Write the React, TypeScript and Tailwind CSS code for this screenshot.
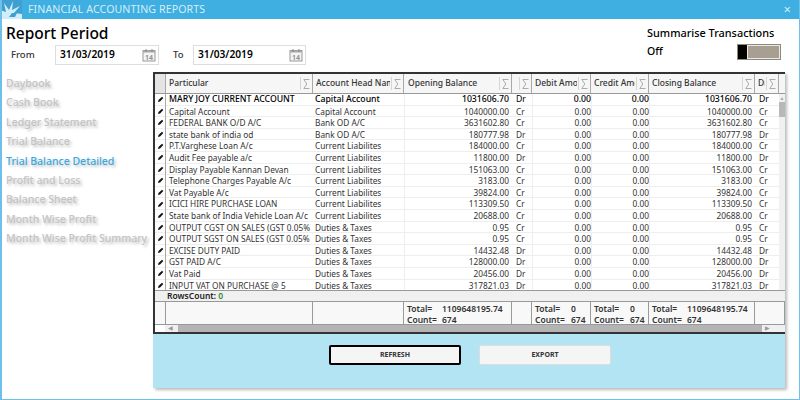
import React from "react";

const cols = "grid grid-cols-[11px_147px_91px_108px_20px_59px_58px_106px_24px]";
const footCols = "grid grid-cols-[11px_147px_91px_108px_20px_59px_58px_106px_30px]";
const rows: [string, string, string, string][] = [
  ["MARY JOY CURRENT ACCOUNT", "Capital Account", "1031606.70", "Dr"],
  ["Capital Account", "Capital Account", "1040000.00", "Cr"],
  ["FEDERAL BANK O/D A/C", "Bank OD A/C", "3631602.80", "Cr"],
  ["state bank of india od", "Bank OD A/C", "180777.98", "Dr"],
  ["P.T.Varghese Loan A/c", "Current Liabilites", "184000.00", "Cr"],
  ["Audit  Fee payable a/c", "Current Liabilites", "11800.00", "Dr"],
  ["Display Payable Kannan Devan", "Current Liabilites", "151063.00", "Cr"],
  ["Telephone Charges Payable A/c", "Current Liabilites", "3183.00", "Cr"],
  ["Vat Payable A/c", "Current Liabilites", "39824.00", "Cr"],
  ["ICICI HIRE PURCHASE LOAN", "Current Liabilites", "113309.50", "Cr"],
  ["State bank of India Vehicle Loan A/c", "Current Liabilites", "20688.00", "Cr"],
  ["OUTPUT CGST ON SALES (GST 0.05%", "Duties & Taxes", "0.95", "Cr"],
  ["OUTPUT SGST ON SALES (GST 0.05%", "Duties & Taxes", "0.95", "Cr"],
  ["EXCISE DUTY PAID", "Duties & Taxes", "14432.48", "Dr"],
  ["GST PAID A/C", "Duties & Taxes", "128000.00", "Dr"],
  ["Vat Paid", "Duties & Taxes", "20456.00", "Dr"],
  ["INPUT VAT ON PURCHASE @ 5", "Duties & Taxes", "317821.03", "Dr"],
];
const menu = ["Daybook", "Cash Book", "Ledger Statement", "Trial Balance", "Trial Balance Detailed", "Profit and Loss", "Balance Sheet", "Month Wise Profit", "Month Wise Profit Summary"];

function Sigma() {
  return (
    <span className="flex items-center h-[13px] border-l border-gray-300 pl-[2px] shrink-0">
      <svg width="7" height="10" viewBox="0 0 7 10" fill="none">
        <path d="M6.5 0.5H0.8L3.8 5L0.8 9.5H6.5" stroke="#999" strokeWidth="0.8" />
      </svg>
    </span>
  );
}
function Head({ label, pl = "pl-[3px]" }: { label: string; pl?: string }) {
  return (
    <div className={`flex items-center gap-[1px] border-r border-[#a8a8a8] ${pl} pr-[2px] min-w-0 overflow-hidden`}>
      <span className="flex-1 min-w-0 whitespace-nowrap overflow-hidden">{label}</span>
      <Sigma />
    </div>
  );
}
function Cal() {
  return (
    <svg width="14" height="14" viewBox="0 0 14 14" fill="none" className="shrink-0">
      <rect x="1" y="2.5" width="12" height="10.5" fill="#f4f4f4" stroke="#999" />
      <rect x="1" y="2.5" width="12" height="2" fill="#aaa" />
      <path d="M4 1v3M10 1v3" stroke="#888" />
      <text x="7" y="11.5" fontSize="7" textAnchor="middle" fill="#888" fontFamily="Noto Sans">14</text>
    </svg>
  );
}
function DateBox({ w }: { w: string }) {
  return (
    <div className={`${w} h-5 border border-[#ddd] flex items-center justify-between pl-1 pr-[2px] text-[10.2px] font-semibold text-black`}>
      31/03/2019
      <Cal />
    </div>
  );
}
function Foot({ total, count, gap }: { total: string; count: string; gap: string }) {
  return (
    <div className="border-r border-[#9a9a9a] pl-[3px] pt-[1px] font-semibold leading-[11px] text-[#333] whitespace-nowrap overflow-hidden">
      <div className="flex"><span className={gap}>Total=</span><span>{total}</span></div>
      <div className="flex"><span className={gap}>Count=</span><span>{count}</span></div>
    </div>
  );
}

export default function App() {
  return (
    <div className="w-[800px] h-[400px] bg-white flex flex-col overflow-hidden border-l-2 border-r border-b border-[#6cc0ea] font-['Noto_Sans',sans-serif] text-[#333]">
      <div className="h-[19px] -ml-[2px] -mr-px bg-[#3faee0] flex items-center justify-between shrink-0">
        <div className="flex items-center h-full">
          <div className="w-[22px] h-[19px] flex items-center justify-center">
            <svg width="22" height="19" viewBox="0 0 22 19">
              <rect width="22" height="19" fill="#3f9fd0" />
              <path d="M0 19L0 10L6 12L4 3L9 10L13 1L12 10L20 6L14 13L22 14V19Z" fill="#cfeefa" />
              <path d="M9 17l3-4h5l-2 4z" fill="#3f9fd0" />
            </svg>
          </div>
          <span className="ml-[6px] text-[10.6px] text-[#d5eefa] tracking-[0.1px]">FINANCIAL ACCOUNTING REPORTS</span>
        </div>
        <span className="text-[13px] text-[#cfeefa] mr-[9px] leading-none">×</span>
      </div>

      <div className="flex justify-between pl-1 h-[53px] shrink-0">
        <div>
          <div className="text-[15.5px] font-medium leading-[20px] text-black mt-[4px]">Report Period</div>
          <div className="flex items-center mt-[2px] text-[9.5px] font-medium">
            <span className="w-[49px] pl-[5px]">From</span>
            <DateBox w="w-[104px]" />
            <span className="w-[34px] pl-[14px]">To</span>
            <DateBox w="w-[113px]" />
          </div>
        </div>
        <div className="w-[134px] mr-[18px] text-[10.5px] font-medium text-black">
          <div className="mt-[4px] leading-[20px] text-[10.9px] whitespace-nowrap">Summarise Transactions</div>
          <div className="flex items-center justify-between mt-[1px]">
            Off
            <div className="w-11 h-4 flex border border-[#8f887c]">
              <div className="w-[9px] bg-black" />
              <div className="flex-1 bg-[#a69f92] border border-[#e8e8e8]" />
            </div>
          </div>
        </div>
      </div>

      <div className="flex flex-1 min-h-0 pb-[11px]">
        <div className="w-[151px] shrink-0 pl-[4px] pt-[2px] text-[10.5px] font-medium text-[#c4c4c4] [text-shadow:2px_2px_3px_#bbb]">
          {menu.map((m) => (
            <div key={m} className={`h-[19.4px] leading-[19px] whitespace-nowrap ${m === "Trial Balance Detailed" ? "text-[#38a8e0]" : ""}`}>{m}</div>
          ))}
        </div>
        <div className="w-[632px] flex flex-col shadow-[2px_2px_3px_#bbb]">
          <div className="h-[262px] border-2 border-r-0 border-[#333] bg-white flex flex-col text-[8.3px] overflow-hidden">
            <div className="flex h-[20px] shrink-0 bg-[#f6f6f6] border-b border-[#999] font-medium text-[8.5px]">
              <div className={`${cols} w-[624px]`}>
                <div className="bg-[#e4e4e4] border-r border-[#a8a8a8]" />
                <Head label="Particular" />
                <Head label="Account Head Name" />
                <Head label="Opening Balance" pl="pl-[4px]" />
                <Head label="" />
                <Head label="Debit Amount" />
                <Head label="Credit Amount" />
                <Head label="Closing Balance" />
                <Head label="Dr" />
              </div>
            </div>
            <div className="flex h-[196px] shrink-0">
              <div className="w-[624px] overflow-hidden">
                {rows.map((r, i) => (
                  <div key={r[0]} className={`${cols} h-[11.6px] leading-[11.6px] border-b border-[#eee] ${i === 0 ? "font-medium text-black text-[8.7px]" : ""}`}>
                    <div className="border-r border-[#aaa] flex items-center justify-center">
                      <svg width="7" height="7" viewBox="0 0 7 7"><path d="M1 6L1.5 4L5 0.7L6.3 2L3 5.5Z" fill="#111" /></svg>
                    </div>
                    <div className="pl-[3px] whitespace-nowrap overflow-hidden">{r[0]}</div>
                    <div className="pl-[2px] whitespace-nowrap overflow-hidden">{r[1]}</div>
                    <div className="text-right pr-[3px] border-l border-[#eee]">{r[2]}</div>
                    <div className="pl-[4px] font-normal">{r[3]}</div>
                    <div className="text-right border-l border-[#eee]">0.00</div>
                    <div className="text-right border-l border-[#eee]">0.00</div>
                    <div className="text-right pr-[3px] border-l border-[#eee]">{r[2]}</div>
                    <div className="pl-[4px] font-normal">{r[3]}</div>
                  </div>
                ))}
              </div>
              <div className="w-[6px] bg-[#f0f0f0] flex flex-col items-center">
                <div className="h-[8px] text-[5px] leading-[8px] text-[#aaa]">▲</div>
                <div className="w-full h-[15px] bg-[#b8b8b8]" />
              </div>
            </div>
            <div className="h-[12px] shrink-0 bg-[#f0f0f0] border-y border-[#999] flex items-center font-semibold leading-none text-[8.5px] text-[#222]">
              <span className="ml-[12px]">RowsCount: <span className="text-[#2e8b3a]">0</span></span>
            </div>
            <div className={`${footCols} h-[23px] shrink-0 bg-[#f8f8f8] border-b border-[#9a9a9a] text-[8.5px]`}>
              <div className="border-r border-[#9a9a9a]" />
              <div className="border-r border-[#9a9a9a]" />
              <div className="border-r border-[#9a9a9a]" />
              <Foot total="1109648195.74" count="674" gap="w-[35px]" />
              <div className="border-r border-[#9a9a9a]" />
              <Foot total="0" count="674" gap="w-[36px]" />
              <Foot total="0" count="674" gap="w-[36px]" />
              <Foot total="1109648195.74" count="674" gap="w-[35px]" />
              <div className="border-r border-[#9a9a9a]" />
            </div>
            <div className="flex-1 ml-[10px] bg-[#b4b4b4] flex items-center justify-between text-[6px] leading-[7px] text-[#999]">
              <span className="bg-[#f0f0f0] w-[13px] h-full pl-[3px]">◀</span>
              <span className="bg-[#f0f0f0] w-[23px] h-full pl-[3px]">▶</span>
            </div>
          </div>
          <div className="flex-1 bg-[#b3e4f3] flex justify-center gap-[18px] pt-[11px] pl-[2px]">
            <button className="w-[132px] h-5 rounded-[2px] border-2 border-black bg-[#f5f5f5] text-[7px] font-bold">REFRESH</button>
            <button className="w-[132px] h-5 rounded-[2px] border border-[#ddd] bg-[#f5f5f5] text-[7px] font-bold">EXPORT</button>
          </div>
        </div>
      </div>
    </div>
  );
}
